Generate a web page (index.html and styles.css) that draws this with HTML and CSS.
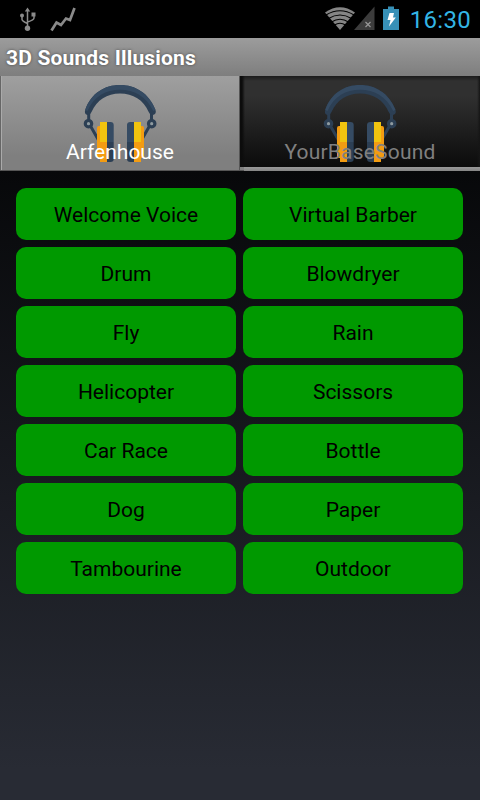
FILE: index.html
```html
<!DOCTYPE html>
<html lang="en">
<head>
<meta charset="utf-8">
<title>3D Sounds Illusions</title>
<link rel="stylesheet" href="styles.css">
</head>
<body>
<svg class="defs" width="0" height="0">
  <symbol id="headphones" viewBox="0 0 80 84">
    <path d="M8.700 33V41M71.500 33V41M10.500 46 19 61M69.500 46 61 61" fill="none" stroke="#2c3f54" stroke-width="3"/>
    <path d="M5.200 30C11 13 25 5 40 5s29 8 35.500 25q1.300 4-2.500 5-3 .5-4.300-3C63.500 20 53 13.500 40 13.500S17 20 11.500 32q-1.300 3.500-4.300 3Q4 34 5.200 30z" fill="#2c3f54"/>
    <path d="M5.200 30C11 13 25 5 40 5s29 8 35.500 25l-2.300 1C66 16 54 9.800 40 9.800S14 16 7.500 31z" fill="#354b63"/>
    <circle cx="8.500" cy="43.700" r="3.200" fill="#8f9ba0" stroke="#2c3f54" stroke-width="3.200"/>
    <circle cx="71.700" cy="43.700" r="3.200" fill="#8f9ba0" stroke="#2c3f54" stroke-width="3.200"/>
    <path d="M27 42h3.500q3.200 0 3.200 3v17H27zM54 42h-3.500q-3.500 0-3.500 3v17h7z" fill="#354b63"/>
    <path d="M27 62h6.700v17q0 3-3.200 3H27zM54 62h-7v17q0 3 3.500 3h3.500z" fill="#2c3f54"/>
    <rect x="17" y="46" width="6" height="32" rx="2" fill="#f39c12"/>
    <rect x="58" y="46" width="6" height="32" rx="2" fill="#f39c12"/>
    <path d="M20 62h7v20h-7zM54 62h7v20h-7z" fill="#f39c12"/>
    <path d="M20 42h7v20h-7zM54 42h7v20h-7z" fill="#f1c40f"/>
  </symbol>
</svg>
<header class="status">
  <div class="status-left">
    <svg width="80" height="38" viewBox="0 0 80 38">
      <g fill="none" stroke="#8a8a8a" stroke-width="1.500">
        <path d="M27.500 10v17M22 16v3.500q0 1.500 5.500 4M34 15v3q0 2-6.500 4"/>
        <path d="M51.500 30.500 56.500 22.500 61 25 66 18.500 70 20 74.500 8" stroke-width="2.700"/>
      </g>
      <path d="M27.500 7.500l2.700 4h-5.400zM31.500 12.500h4v4h-4z" fill="#8a8a8a"/>
      <circle cx="22" cy="15.500" r="2" fill="#8a8a8a"/>
      <circle cx="27.500" cy="28.300" r="2.700" fill="#8a8a8a"/>
    </svg>
  </div>
  <div class="status-right">
    <svg width="80" height="38" viewBox="322 0 80 38">
      <path d="M340 30 325 12.500Q340 2 355 12.500z" fill="#858585"/>
      <path d="M326 15q14-8.500 28 0M328.500 18.500q11.500-7 23 0M331.500 22q8.500-5.500 17 0M334.500 25q5.500-3.500 11 0" fill="none" stroke="#000" stroke-width="1.100"/>
      <path d="M374.500 6.500V30H354z" fill="#3c3c3c"/>
      <path d="M365.500 22l5 5m0-5-5 5" stroke="#999" stroke-width="1.200"/>
      <path d="M388 6.500h6V9h5v21h-16V9h5z" fill="#3790b7"/>
      <path d="M389.500 13h4.500l-1 4.500h2.800L389 26.500l1.500-6.500h-3z" fill="#fff"/>
    </svg>
    <span class="clock">16:30</span>
  </div>
</header>
<h1 class="title"><span>3D Sounds Illusions</span></h1>
<nav class="tabs">
  <div class="tab active"><svg class="icon"><use href="#headphones"/></svg><span class="label">Arfenhouse</span></div>
  <div class="tab"><svg class="icon"><use href="#headphones"/></svg><span class="label wide">YourBaseSound</span></div>
</nav>
<main class="grid">
  <button>Welcome Voice</button><button>Virtual Barber</button>
  <button>Drum</button><button>Blowdryer</button>
  <button>Fly</button><button>Rain</button>
  <button>Helicopter</button><button>Scissors</button>
  <button>Car Race</button><button>Bottle</button>
  <button>Dog</button><button>Paper</button>
  <button>Tambourine</button><button>Outdoor</button>
</main>
</body>
</html>
```
FILE: styles.css
```css
* { box-sizing: border-box; }
body {
  margin: 0;
  width: 480px;
  height: 800px;
  overflow: hidden;
  font-family: Roboto, "Liberation Sans", sans-serif;
  background: linear-gradient(#000 0, #07080a 170px, #282b34 770px, #282b34 100%);
}
.defs { display: block; }
.status {
  height: 38px;
  background: #000;
  display: flex;
  justify-content: space-between;
}
.status-right { display: flex; }
.clock {
  width: 78px;
  padding: 1px 9px 0 0;
  color: #33b5e5;
  font-size: 24px;
  letter-spacing: 0.3px;
  line-height: 38px;
  text-align: right;
  white-space: nowrap;
}
.title {
  margin: 0;
  height: 38px;
  padding: 1px 0 0 6px;
  background: linear-gradient(#9c9c9c, #7e7e7e);
  color: #fff;
  font-size: 21px;
  font-weight: 700;
  letter-spacing: 0.16px;
  line-height: 38px;
  text-shadow: 0 0 3px #444;
  white-space: nowrap;
}
.tabs {
  display: grid;
  grid-template-columns: 240px 240px;
  height: 95px;
  background: #000;
}
.tab {
  display: grid;
  justify-items: center;
  align-items: start;
  height: 95px;
  background:
    linear-gradient(#808080 3px, #555 3px) 0 91px / 4px 4px no-repeat,
    linear-gradient(#999, #858585) 4px 91px / 236px 4px no-repeat,
    linear-gradient(90deg, #0c0c0c 2px, transparent 5px, transparent 237px, #151515) 0 0 / 240px 91px no-repeat,
    linear-gradient(#1c1c1c, #303030 5px, #303030 20px, #0b0b0b 91px);
  color: #808080;
}
.tab.active {
  background: linear-gradient(#9f9f9f, #7f7f7f 80px);
  border-bottom: 1px solid #555;
  box-shadow: inset 1px 0 #666, inset 2px 0 #aaa, inset -1px 0 #555;
  color: #fff;
}
.icon {
  grid-area: 1 / 1;
  width: 80px;
  height: 84px;
  margin-top: 4px;
}
.label {
  grid-area: 1 / 1;
  margin-top: 64px;
  font-size: 21px;
  line-height: 25px;
  z-index: 1;
}
.label.wide { letter-spacing: 0.2px; }
.grid {
  display: grid;
  grid-template-columns: 220px 220px;
  grid-auto-rows: 52px;
  gap: 7px;
  padding: 17px 16px;
}
.grid button {
  border: 0;
  border-radius: 10px;
  padding: 2px 0 0;
  background: #009900;
  color: #000;
  font: 21px/25px Roboto, "Liberation Sans", sans-serif;
}
```
